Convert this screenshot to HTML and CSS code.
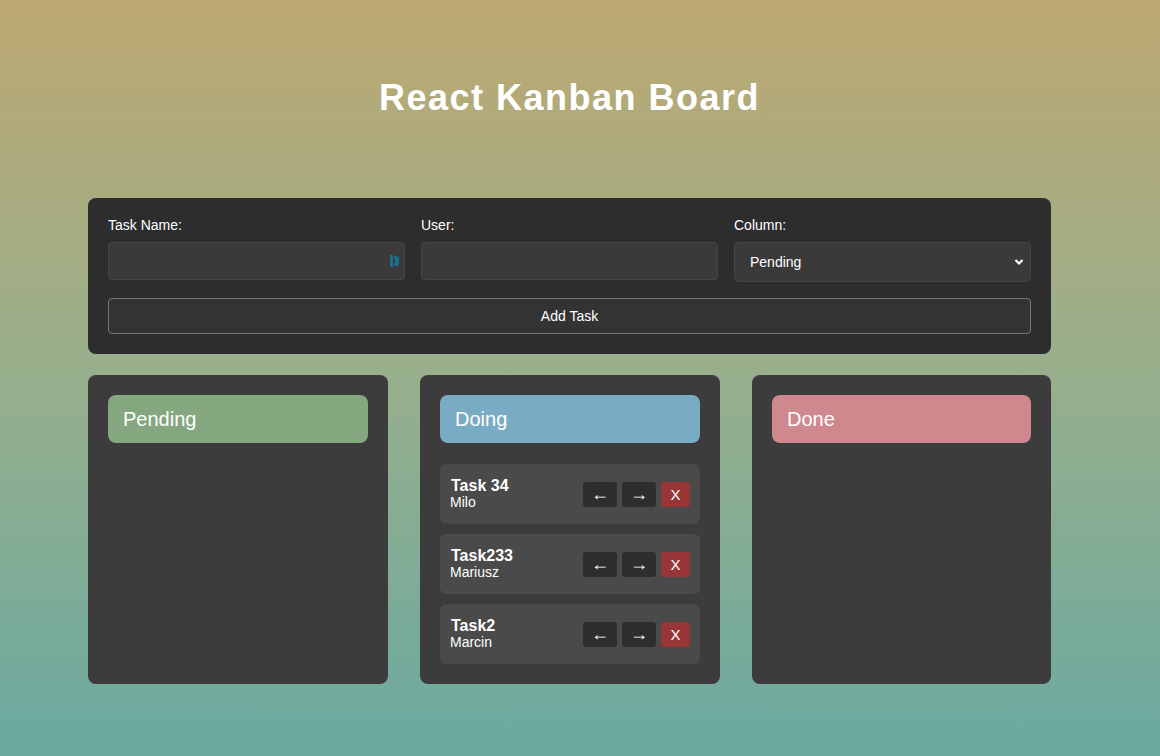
FILE: index.html
```html
<!DOCTYPE html>
<html lang="en">
<head>
<meta charset="utf-8">
<title>React Kanban Board</title>
<link rel="stylesheet" href="styles.css">
</head>
<body>
<div class="app">
  <h1 class="title">React Kanban Board</h1>
  <form class="panel">
    <div class="fields">
      <div class="field">
        <label class="label">Task Name:</label>
        <div class="input-wrap">
          <input class="input" type="text">
          <svg class="ext-icon" width="10" height="14" viewBox="0 0 10 14"><rect x="0" y="1" width="3" height="12" fill="#1d6f8f"/><path d="M4 2 h2 a3 3 0 0 1 3 3 v4 a3 3 0 0 1 -3 3 h-2 v-3 h1 v-4 h-1 z" fill="#1d6f8f"/></svg>
        </div>
      </div>
      <div class="field">
        <label class="label">User:</label>
        <input class="input" type="text">
      </div>
      <div class="field">
        <label class="label">Column:</label>
        <div class="select">
          <span>Pending</span>
          <svg width="10" height="8" viewBox="0 0 10 8"><path d="M1.5 2 L5 5.5 L8.5 2" fill="none" stroke="#fff" stroke-width="2.2"/></svg>
        </div>
      </div>
    </div>
    <div class="add-btn">Add Task</div>
  </form>
  <div class="board">
    <div class="column">
      <div class="col-head pending">Pending</div>
    </div>
    <div class="column">
      <div class="col-head doing">Doing</div>
      <div class="task">
        <div class="task-info"><div class="task-name">Task 34</div><div class="task-user">Milo</div></div>
        <div class="actions"><span class="btn">←</span><span class="btn">→</span><span class="btn del">X</span></div>
      </div>
      <div class="task">
        <div class="task-info"><div class="task-name">Task233</div><div class="task-user">Mariusz</div></div>
        <div class="actions"><span class="btn">←</span><span class="btn">→</span><span class="btn del">X</span></div>
      </div>
      <div class="task">
        <div class="task-info"><div class="task-name">Task2</div><div class="task-user">Marcin</div></div>
        <div class="actions"><span class="btn">←</span><span class="btn">→</span><span class="btn del">X</span></div>
      </div>
    </div>
    <div class="column">
      <div class="col-head done">Done</div>
    </div>
  </div>
</div>
</body>
</html>
```
FILE: styles.css
```css
html, body {
  margin: 0;
  height: 100%;
}
body {
  background: linear-gradient(to bottom, #bda872 0%, #97af8c 50%, #6aa9a0 100%);
  font-family: "Liberation Sans", Arial, sans-serif;
  color: #fff;
  overflow: hidden;
}
.app {
  width: 963px;
  margin-left: 88px;
  padding-top: 78px;
}
.title {
  margin: 0 0 84px;
  text-align: center;
  font-size: 36px;
  font-weight: bold;
  letter-spacing: 1.5px;
  line-height: 40px;
  height: 36px;
}
.panel {
  background: #2d2d2d;
  border-radius: 8px;
  padding: 19px 20px 20px;
  margin: 0;
}
.fields {
  display: grid;
  grid-template-columns: 1fr 1fr 1fr;
  column-gap: 16px;
}
.field {
  display: flex;
  flex-direction: column;
}
.label {
  font-size: 14px;
  line-height: 16px;
  margin-bottom: 9px;
}
.input-wrap {
  position: relative;
}
.input {
  box-sizing: border-box;
  width: 100%;
  height: 38px;
  background: #3a3a3a;
  border: 1px solid #454545;
  border-radius: 4px;
  margin: 0;
  outline: none;
}
.ext-icon {
  position: absolute;
  right: 5px;
  top: 12px;
}
.select {
  box-sizing: border-box;
  height: 40px;
  background: #3a3a3a;
  border: 1px solid #454545;
  border-radius: 4px;
  display: flex;
  align-items: center;
  justify-content: space-between;
  padding: 0 6px 0 15px;
  font-size: 14px;
}
.add-btn {
  margin-top: 16px;
  height: 36px;
  box-sizing: border-box;
  border: 1px solid #7b7665;
  border-radius: 4px;
  background: #333;
  display: flex;
  align-items: center;
  justify-content: center;
  font-size: 14px;
}
.board {
  margin-top: 21px;
  display: grid;
  grid-template-columns: 300px 300px 299px;
  column-gap: 32px;
}
.column {
  background: #3c3c3c;
  border-radius: 8px;
  padding: 20px;
  height: 309px;
  box-sizing: border-box;
  display: flex;
  flex-direction: column;
  gap: 10px;
}
.col-head {
  height: 48px;
  border-radius: 8px;
  display: flex;
  align-items: center;
  padding-left: 15px;
  padding-top: 1px;
  box-sizing: border-box;
  font-size: 20px;
  margin-bottom: 11px;
  flex-shrink: 0;
}
.pending { background: #84a780; }
.doing { background: #7aabc4; }
.done { background: #d0888f; }
.task {
  background: #4a4a4a;
  border-radius: 6px;
  height: 60px;
  flex-shrink: 0;
  display: flex;
  align-items: center;
  justify-content: space-between;
  padding: 0 10px;
}
.task-name {
  font-weight: bold;
  font-size: 16px;
  line-height: 16px;
  padding-left: 1px;
}
.task-user {
  font-size: 14px;
  line-height: 16px;
}
.actions {
  display: flex;
  gap: 5px;
}
.btn {
  width: 34px;
  height: 25px;
  background: #2e2e2e;
  border-radius: 3px;
  display: flex;
  align-items: center;
  justify-content: center;
  font-size: 18px;
}
.btn.del {
  width: 29px;
  background: #983536;
  font-size: 15px;
}
```
